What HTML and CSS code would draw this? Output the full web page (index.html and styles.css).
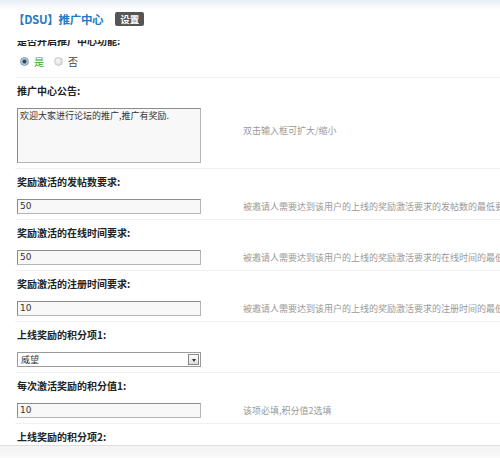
FILE: index.html
```html
<!DOCTYPE html>
<html lang="zh-CN">
<head>
<meta charset="utf-8">
<title>推广中心</title>
<link rel="stylesheet" href="styles.css">
</head>
<body>
<div class="header">
  <h1 class="title">【DSU】推广中心</h1>
  <span class="btn">设置</span>
</div>

<div class="content">
  <div class="row row-first">
    <div class="label">是否开启推广中心功能:</div>
    <div class="radios">
      <span class="radio checked"></span><span class="yes">是</span>
      <span class="radio"></span><span class="no">否</span>
    </div>
  </div>

  <div class="row">
    <div class="label">推广中心公告:</div>
    <div class="line">
      <div class="textarea">欢迎大家进行论坛的推广,推广有奖励.</div>
      <div class="hint hint-up">双击输入框可扩大/缩小</div>
    </div>
  </div>

  <div class="row">
    <div class="label">奖励激活的发帖数要求:</div>
    <div class="line">
      <div class="input">50</div>
      <div class="hint">被邀请人需要达到该用户的上线的奖励激活要求的发帖数的最低要求</div>
    </div>
  </div>

  <div class="row">
    <div class="label">奖励激活的在线时间要求:</div>
    <div class="line">
      <div class="input">50</div>
      <div class="hint">被邀请人需要达到该用户的上线的奖励激活要求的在线时间的最低要求</div>
    </div>
  </div>

  <div class="row">
    <div class="label">奖励激活的注册时间要求:</div>
    <div class="line">
      <div class="input">10</div>
      <div class="hint">被邀请人需要达到该用户的上线的奖励激活要求的注册时间的最低要求</div>
    </div>
  </div>

  <div class="row">
    <div class="label">上线奖励的积分项1:</div>
    <div class="line">
      <div class="select"><span class="select-text">威望</span><span class="arrow"></span></div>
    </div>
  </div>

  <div class="row">
    <div class="label">每次激活奖励的积分值1:</div>
    <div class="line">
      <div class="input">10</div>
      <div class="hint">该项必填,积分值2选填</div>
    </div>
  </div>

  <div class="row">
    <div class="label">上线奖励的积分项2:</div>
    <div class="line">
      <div class="select"><span class="select-text">威望</span><span class="arrow"></span></div>
    </div>
  </div>
</div>

<div class="footer"></div>
</body>
</html>
```

FILE: styles.css
```css
html, body {
  margin: 0;
  padding: 0;
  background: #fff;
  overflow: hidden;
}
body {
  width: 500px;
  height: 458px;
  font-family: "Noto Sans CJK SC", "DejaVu Sans", sans-serif;
  font-size: 9px;
  color: #333;
  position: relative;
}
.header {
  position: absolute;
  top: 0;
  left: 0;
  right: 0;
  height: 40px;
  box-sizing: border-box;
  padding: 0 0 2px 13px;
  background: linear-gradient(#e5edf7 0px, #f7f9fd 6px, #ffffff 10px);
  display: flex;
  align-items: center;
  gap: 12px;
  z-index: 2;
}
.title {
  margin: 0;
  font-size: 11.5px;
  font-weight: bold;
  color: #1e7ac8;
  letter-spacing: -0.3px;
  line-height: 14px;
}
.btn {
  background: #555;
  color: #fff;
  font-size: 9.5px;
  line-height: 14px;
  height: 14px;
  padding: 0 5px;
  border-radius: 2px;
  font-weight: bold;
}
.content {
  margin-left: 15px;
  padding-top: 28px;
}
.row {
  border-bottom: 1px solid #f0f0f0;
  padding: 6px 0 5px 2px;
}
.row-first {
  padding-bottom: 8px;
}
.label {
  font-size: 10px;
  font-weight: bold;
  line-height: 14px;
  height: 14px;
  white-space: nowrap;
  color: #222;
}
.radios {
  margin-top: 6px;
  height: 15px;
  display: flex;
  align-items: center;
  padding-left: 3px;
  font-size: 10px;
}
.radio {
  width: 9px;
  height: 9px;
  border-radius: 50%;
  border: 1px solid #c8c8c8;
  background: radial-gradient(circle at 40% 40%, #fafafa, #d0d0d0);
  box-sizing: border-box;
  margin-right: 5px;
}
.radio.checked {
  border-color: #7f93aa;
  background: radial-gradient(circle, #2f4a66 0px, #2f4a66 1.6px, #a9bdd2 2.4px, #dfe7f0 4px);
}
.yes {
  color: #1fae1f;
  margin-right: 10px;
}
.no {
  color: #444;
}
.line {
  margin-top: 10px;
  display: flex;
  align-items: center;
  white-space: nowrap;
}
.input, .textarea, .select {
  width: 184px;
  box-sizing: border-box;
  border: 1px solid #b5b5b5;
  border-top-color: #8c8c8c;
  border-left-color: #8c8c8c;
  background: #f8f8f8;
  flex-shrink: 0;
}
.input {
  height: 15px;
  line-height: 13px;
  font-family: "DejaVu Sans", sans-serif;
  font-size: 9px;
  padding-left: 2px;
  color: #333;
}
.textarea {
  height: 55px;
  padding: 1px 2px;
  line-height: 11px;
  font-size: 9px;
  color: #333;
  white-space: normal;
}
.select {
  height: 15px;
  display: flex;
  align-items: center;
  justify-content: space-between;
  background: #fff;
  padding: 0 1px 0 3px;
  border-color: #999;
}
.select-text {
  font-size: 9px;
  line-height: 13px;
}
.arrow {
  width: 11px;
  height: 11px;
  box-sizing: border-box;
  border: 1px solid #888;
  background: linear-gradient(#ffffff, #dcdcdc);
  display: flex;
  align-items: center;
  justify-content: center;
}
.arrow::after {
  content: "";
  border-left: 2.5px solid transparent;
  border-right: 2.5px solid transparent;
  border-top: 3px solid #333;
  margin-top: 1px;
}
.hint {
  margin-left: 42px;
  color: #999;
  font-size: 9px;
  line-height: 12px;
}
.hint-up {
  margin-top: -9px;
}
.footer {
  position: absolute;
  left: 0;
  right: 0;
  bottom: 0;
  height: 12px;
  background: linear-gradient(#f3f3f3, #fafafa);
  border-top: 1px solid #dedede;
  z-index: 2;
}
```
